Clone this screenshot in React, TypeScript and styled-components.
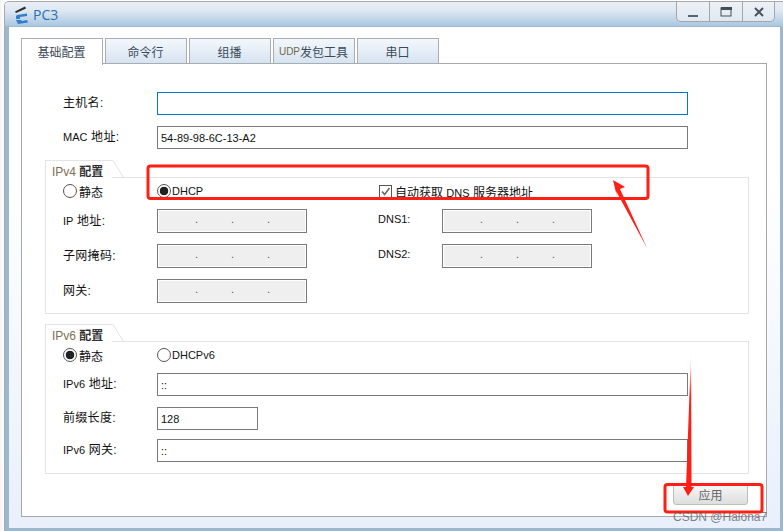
import React from "react";
import styled, { createGlobalStyle } from "styled-components";

const GlobalStyle = createGlobalStyle`
	html, body {
		margin: 0;
		width: 783px;
		height: 531px;
		overflow: hidden;
		background: #fff;
	}
	body {
		font-family: "Liberation Sans", "Noto Sans CJK SC", sans-serif;
		font-size: 12px;
		color: #111;
	}
	* {
		box-sizing: border-box;
	}
`;

const Page = styled.div`
	position: relative;
	width: 783px;
	height: 531px;
	padding: 1px 0 0 4px;
	background: linear-gradient(90deg, #f4f4f4, #fff 4px);
`;

const Window = styled.div`
	display: flex;
	flex-direction: column;
	width: 779px;
	height: 530px;
	border-left: 1px solid #a9a9a9;
	border-top: 1px solid #a9a9a9;
	border-radius: 5px 0 0 0;
	overflow: hidden;
`;

const TitleBar = styled.div`
	display: flex;
	justify-content: space-between;
	align-items: flex-start;
	height: 24px;
	flex: none;
	padding: 0 8px 0 9px;
	background: linear-gradient(180deg, #e9eef6 0%, #dfe8f3 35%, #a9c7e1 100%);
`;

const TitleLeft = styled.div`
	display: flex;
	align-items: center;
	gap: 3px;
	height: 25px;
`;

const TitleText = styled.span`
	font-family: "Open Sans", "Liberation Sans", sans-serif;
	font-size: 14px;
	color: #2a6fb5;
`;

const WinButtons = styled.div`
	display: flex;
	height: 20px;
	background: linear-gradient(180deg, #edf1f7, #dfe8f2);
	border: 1px solid #a6a6a6;
	border-top: 0;
	border-radius: 0 0 5px 5px;
`;

const WinButton = styled.div<{ $last?: boolean }>`
	display: flex;
	align-items: center;
	justify-content: center;
	width: ${(p) => (p.$last ? 31 : 33)}px;
	border-right: ${(p) => (p.$last ? "0" : "1px solid #a6a6a6")};
`;

const Body = styled.div`
	flex: 1;
	min-height: 0;
	display: flex;
	flex-direction: column;
	padding: 11px 13px 11px 12px;
	background: linear-gradient(180deg, #fff 0%, #fff 30%, #e9f0fb 100%);
	border-top: 1px solid #9fbbd2;
	border-left: 4px solid #9ab8d0;
	border-right: 3px solid #9ab8d0;
	border-bottom: 3px solid #9ab8d0;
`;

const TabStrip = styled.div`
	display: flex;
	gap: 2px;
	height: 26px;
	flex: none;
	margin-bottom: -1px;
	position: relative;
`;

const Tab = styled.div<{ $active?: boolean }>`
	display: flex;
	align-items: center;
	justify-content: center;
	width: 82px;
	height: ${(p) => (p.$active ? "27px" : "26px")};
	padding: 0 1px ${(p) => (p.$active ? "1px" : "0")} 0;
	font-size: 12px;
	color: #3c4a58;
	border: 1px solid #a9adb2;
	border-bottom: ${(p) => (p.$active ? "0" : "1px solid #a9adb2")};
	background: ${(p) =>
		p.$active ? "#fff" : "linear-gradient(180deg, #f3f7fc 0%, #e6eef7 50%, #d5e3f1 100%)"};
	position: relative;
	z-index: ${(p) => (p.$active ? 1 : 0)};
`;

const UdpLatin = styled.span`
	font-size: 10px;
	color: #6f6a4a;
`;

const TabPanel = styled.div`
	flex: 1;
	min-height: 0;
	padding: 28px 17px 0 0;
	background: #fff;
	border: 1px solid #a8a8a8;
`;

const Rows = styled.div`
	display: flex;
	flex-direction: column;
	gap: 11px;
	padding-left: 41px;
`;

const Row = styled.div<{ $top?: number }>`
	display: flex;
	align-items: center;
	margin-top: ${(p) => p.$top ?? 0}px;
`;

const Label = styled.label<{ $width?: number }>`
	width: ${(p) => p.$width ?? 94}px;
	flex: none;
	padding-bottom: 4px;
	font-size: 12px;
	letter-spacing: 0.3px;
	color: #111;
`;

const Latin = styled.span`
	font-size: 11px;
	letter-spacing: 0;
`;

const TextInput = styled.input<{ $width: number; $focus?: boolean }>`
	width: ${(p) => p.$width}px;
	height: 23px;
	padding: 0 3px;
	font-family: "Liberation Sans", sans-serif;
	font-size: 11px;
	color: #111;
	background: #fff;
	border: 1px solid ${(p) => (p.$focus ? "#0078d7" : "#7a7a7a")};
	border-radius: 0;
	outline: none;
`;

const IpBox = styled.div`
	display: flex;
	justify-content: space-between;
	width: 150px;
	height: 24px;
	padding: 3px 36px 0 37px;
	font-size: 11px;
	color: #555;
	background: #efefef;
	border: 1px solid #7a7a7a;
	box-shadow: inset 0 0 0 1px #fff;
`;

const Group = styled.section<{ $top: number }>`
	width: 704px;
	margin: ${(p) => p.$top}px 0 0 23px;
`;

const Legend = styled.div`
	display: flex;
	height: 18px;
	margin-bottom: -1px;
	position: relative;
`;

const LegendTab = styled.div`
	width: 67px;
	padding: 1px 0 0 6px;
	font-size: 12px;
	font-weight: 700;
	color: #333;
	background: #fff;
	border: 1px solid #e3e3e3;
	border-width: 1px 0 0 1px;
	white-space: nowrap;
`;

const LegendLatin = styled.span`
	font-weight: 400;
	color: #7d6f55;
`;

const GroupBody = styled.div<{ $bottom: number }>`
	display: flex;
	flex-direction: column;
	gap: 11px;
	padding: 6px 0 ${(p) => p.$bottom}px 17px;
	border: 1px solid #e3e3e3;
`;

const OptionRow = styled.div`
	display: flex;
	align-items: center;
	height: 14px;
`;

const Option = styled.label<{ $width?: number }>`
	display: flex;
	align-items: center;
	gap: 2px;
	width: ${(p) => (p.$width ? `${p.$width}px` : "auto")};
	flex: none;
	font-size: 12px;
	white-space: pre;
`;

const Radio = styled.span<{ $checked?: boolean }>`
	width: 14px;
	height: 14px;
	flex: none;
	border: 1px solid #555;
	border-radius: 50%;
	background: ${(p) =>
		p.$checked ? "radial-gradient(circle, #222 0 4px, #fff 4.6px)" : "#fff"};
`;

const OptionLatin = styled.span`
	margin-left: -1px;
	font-size: 11px;
`;

const CheckBox = styled.span`
	display: flex;
	width: 13px;
	height: 13px;
	flex: none;
	margin-right: 1px;
	border: 1px solid #555;
	background: #fff;
`;

const FieldGap = styled.div`
	width: 71px;
	flex: none;
`;

const Footer = styled.div`
	display: flex;
	justify-content: flex-end;
	margin: 9px 1px 0 0;
`;

const ApplyButton = styled.button`
	width: 75px;
	height: 22px;
	padding: 0;
	font-family: "Noto Sans CJK SC", sans-serif;
	font-size: 12px;
	color: #666;
	background: linear-gradient(180deg, #f8f8f8, #dedede);
	border: 1px solid #bdbdbd;
	border-radius: 3px;
`;

const Annotations = styled.svg`
	position: absolute;
	left: 0;
	top: 0;
	pointer-events: none;
`;

const Watermark = styled.div`
	position: absolute;
	left: 673px;
	top: 510px;
	font-family: "Liberation Sans", sans-serif;
	font-size: 12px;
	color: rgba(90, 90, 90, 0.75);
	white-space: nowrap;
`;

const AppIcon = () => (
	<svg width="16" height="20" viewBox="0 0 16 20">
		<path d="M1 6.5 L11 1.5 L12 3.5 L2 8 Z" fill="#2b2b2b" />
		<path d="M3 10 L13 8.5 L13 11 L6 12 L6 14 L2 14 L2 11 Z" fill="#2f7fcb" />
		<path d="M2 15 L7 15 L8 16 L13 15 L14 17.5 L4 19 Z" fill="#2f7fcb" />
	</svg>
);

const IpField = () => (
	<IpBox>
		<span>.</span>
		<span>.</span>
		<span>.</span>
	</IpBox>
);

const LegendSlant = () => (
	<svg width="12" height="18" viewBox="0 0 12 18">
		<path d="M0 0.5 L1 0.5 L11.5 17.5" fill="none" stroke="#e3e3e3" />
	</svg>
);

const TABS = ["基础配置", "命令行", "组播", "", "串口"];

const App = () => {
	return (
		<Page>
			<GlobalStyle />
			<Window>
				<TitleBar>
					<TitleLeft>
						<AppIcon />
						<TitleText>PC3</TitleText>
					</TitleLeft>
					<WinButtons>
						<WinButton>
							<svg width="12" height="12" viewBox="0 0 12 12">
								<rect x="1" y="9" width="10" height="2" fill="#5a6470" />
							</svg>
						</WinButton>
						<WinButton>
							<svg width="12" height="12" viewBox="0 0 12 12">
								<rect x="1" y="2" width="10" height="8" fill="none" stroke="#444c55" />
								<rect x="1" y="1" width="11" height="3" fill="#444c55" />
							</svg>
						</WinButton>
						<WinButton $last>
							<svg width="12" height="12" viewBox="0 0 12 12">
								<path d="M2 2 L10 10 M10 2 L2 10" stroke="#4a525b" strokeWidth="2" />
							</svg>
						</WinButton>
					</WinButtons>
				</TitleBar>
				<Body>
					<TabStrip>
						{TABS.map((name, index) => (
							<Tab key={index} $active={index === 0}>
								{name || (
									<>
										<UdpLatin>UDP</UdpLatin>发包工具
									</>
								)}
							</Tab>
						))}
					</TabStrip>
					<TabPanel>
						<Rows>
							<Row>
								<Label>主机名:</Label>
								<TextInput $width={531} $focus readOnly value="" />
							</Row>
							<Row>
								<Label>
									<Latin>MAC</Latin> 地址:
								</Label>
								<TextInput $width={531} readOnly value="54-89-98-6C-13-A2" />
							</Row>
						</Rows>

						<Group $top={11}>
							<Legend>
								<LegendTab>
									<LegendLatin>IPv4</LegendLatin> 配置
								</LegendTab>
								<LegendSlant />
							</Legend>
							<GroupBody $bottom={10}>
								<OptionRow>
									<Option $width={94}>
										<Radio />
										静态
									</Option>
									<Option $width={222}>
										<Radio $checked />
										<OptionLatin>DHCP</OptionLatin>
									</Option>
									<Option>
										<CheckBox>
											<svg width="11" height="11" viewBox="0 0 11 11">
												<path d="M2 5.5 L4.5 8.5 L9.5 2" fill="none" stroke="#666" strokeWidth="1.5" />
											</svg>
										</CheckBox>
										<span>
											自动获取 <Latin>DNS</Latin> 服务器地址
										</span>
									</Option>
								</OptionRow>
								<Row>
									<Label>
										<Latin>IP</Latin> 地址:
									</Label>
									<IpField />
									<FieldGap />
									<Label $width={64}>
										<Latin>DNS1:</Latin>
									</Label>
									<IpField />
								</Row>
								<Row>
									<Label>子网掩码:</Label>
									<IpField />
									<FieldGap />
									<Label $width={64}>
										<Latin>DNS2:</Latin>
									</Label>
									<IpField />
								</Row>
								<Row>
									<Label>网关:</Label>
									<IpField />
								</Row>
							</GroupBody>
						</Group>

						<Group $top={10}>
							<Legend>
								<LegendTab>
									<LegendLatin>IPv6</LegendLatin> 配置
								</LegendTab>
								<LegendSlant />
							</Legend>
							<GroupBody $bottom={11}>
								<OptionRow>
									<Option $width={94}>
										<Radio $checked />
										静态
									</Option>
									<Option>
										<Radio />
										<OptionLatin>DHCPv6</OptionLatin>
									</Option>
								</OptionRow>
								<Row>
									<Label>
										<Latin>IPv6</Latin> 地址:
									</Label>
									<TextInput $width={531} readOnly value="::" />
								</Row>
								<Row>
									<Label>前缀长度:</Label>
									<TextInput $width={101} readOnly value="128" />
								</Row>
								<Row $top={-2}>
									<Label>
										<Latin>IPv6</Latin> 网关:
									</Label>
									<TextInput $width={531} readOnly value="::" />
								</Row>
							</GroupBody>
						</Group>

						<Footer>
							<ApplyButton>应用</ApplyButton>
						</Footer>
					</TabPanel>
				</Body>
			</Window>

			<Annotations width="783" height="531" viewBox="0 0 783 531">
				<defs>
					<linearGradient id="fade" x1="0" y1="0" x2="0" y2="1">
						<stop offset="0" stopColor="#ff1f14" stopOpacity="0" />
						<stop offset="0.3" stopColor="#ff1f14" />
						<stop offset="1" stopColor="#ff1f14" />
					</linearGradient>
				</defs>
				<rect x="148" y="166" width="500" height="32.5" rx="2.5" fill="none" stroke="#ff1f14" strokeWidth="3" />
				<path d="M613 180 L625 187 L620 189 L647 248 L616 191 L617 197 Z" fill="#ff1f14" />
				<rect x="665" y="484.5" width="97" height="27.5" rx="2.5" fill="none" stroke="#ff1f14" strokeWidth="3" />
				<path d="M691 353 L691.5 487 L694 487 L688 496 L683 487 L686 487 Z" fill="url(#fade)" />
			</Annotations>
			<Watermark>CSDN @Halona7</Watermark>
		</Page>
	);
};

export default App;
